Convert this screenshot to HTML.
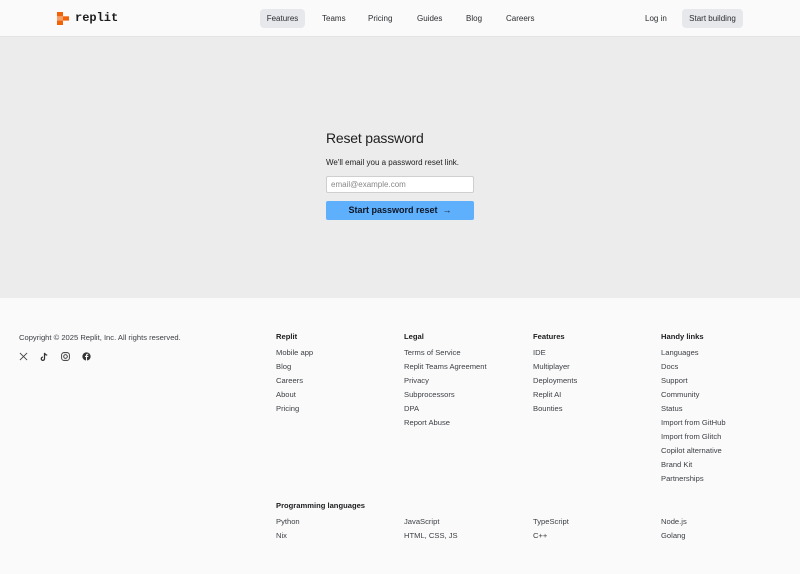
<!DOCTYPE html>
<html><head><meta charset="utf-8"><style>
*{box-sizing:border-box;margin:0;padding:0}
body{width:800px;height:574px;overflow:hidden;font-family:"Liberation Sans",sans-serif;color:#1c1d1f;background:#fafafa}
header{height:37px;background:#fafafa;border-bottom:1px solid #e4e4e4;position:relative;font-size:8px;color:#2b2d31}
.logo{position:absolute;left:57px;top:11px;display:flex;align-items:center}
.logo span{font-family:"Liberation Mono",monospace;font-weight:bold;font-size:12px;margin-left:6px;color:#1c1d1f}
header a{position:absolute;top:9px;height:19px;line-height:19px;border-radius:4px}
.on{background:#e6e8eb;left:260px;width:45px;text-align:center}
main{height:261px;background:#ececec;position:relative}
.f{position:absolute;left:326px;top:93px;width:148px}
h1{font-size:14px;font-weight:normal;letter-spacing:-.2px;height:16px}
.f p{font-size:8px;margin-top:12px}
.in{margin-top:9px;height:17px;background:#fff;border:1px solid #cfcfcf;border-radius:2px;font-size:8px;color:#888;padding:3px 4px}
.btn{margin-top:8px;height:19px;background:#5eb0fc;border-radius:2px;font-size:9px;font-weight:bold;text-align:center;line-height:19px;color:#0e1525}
footer{position:relative;font-size:7.6px;color:#3c3f44}
.c{position:absolute;left:19px;top:35px}
.col{position:absolute}
.col b{display:block;font-weight:bold;color:#1c1d1f;margin-bottom:7px}
.col div{height:14px}
</style></head><body>
<header>
<div class="logo"><svg width="12" height="13" viewBox="0 0 12 13"><rect x="0" y="0" width="6" height="4.3" fill="#f26207"/><rect x="6" y="4.3" width="6" height="4.3" fill="#f26207"/><rect x="0" y="8.6" width="6" height="4.4" fill="#f26207"/><rect x="0" y="4.3" width="6" height="4.3" fill="#f26207" opacity=".6"/></svg><span>replit</span></div>
<a class="on">Features</a><a style="left:322px">Teams</a><a style="left:368px">Pricing</a><a style="left:417px">Guides</a><a style="left:466px">Blog</a><a style="left:506px">Careers</a>
<a style="left:645px">Log in</a><a style="left:682px;width:61px;text-align:center;background:#e6e8eb">Start building</a>
</header>
<main><div class="f"><h1>Reset password</h1><p>We'll email you a password reset link.</p><div class="in">email@example.com</div><div class="btn">Start password reset &nbsp;→</div></div></main>
<footer>
<div class="c">Copyright © 2025 Replit, Inc. All rights reserved.
<div style="margin-top:10px;display:flex;gap:12px;align-items:center;color:#333">
<svg width="9" height="9" viewBox="0 0 10 10"><path d="M1 1L9 9M9 1L1 9" stroke="#444" stroke-width="1"/></svg>
<svg width="9" height="9" viewBox="0 0 10 10"><path d="M5 1V7.5A1.8 1.8 0 1 1 3.2 5.7M5 1C5.5 2.5 6.5 3.3 8 3.4" stroke="#333" stroke-width="1.4" fill="none"/></svg>
<svg width="9" height="9" viewBox="0 0 10 10"><rect x=".7" y=".7" width="8.6" height="8.6" rx="2.5" stroke="#333" fill="none"/><circle cx="5" cy="5" r="2" stroke="#333" fill="none"/></svg>
<svg width="9" height="9" viewBox="0 0 10 10"><circle cx="5" cy="5" r="4.6" fill="#333"/><path d="M5.6 10V5.5H7V4.3H5.6V3.6c0-.4.2-.6.6-.6H7V1.9H6C5 1.9 4.4 2.5 4.4 3.5v.8H3.3v1.2h1.1V10" fill="#fafafa"/></svg>
</div></div>
<div class="col" style="left:276px;top:34px"><b>Replit</b><div>Mobile app</div><div>Blog</div><div>Careers</div><div>About</div><div>Pricing</div></div>
<div class="col" style="left:404px;top:34px"><b>Legal</b><div>Terms of Service</div><div>Replit Teams Agreement</div><div>Privacy</div><div>Subprocessors</div><div>DPA</div><div>Report Abuse</div></div>
<div class="col" style="left:533px;top:34px"><b>Features</b><div>IDE</div><div>Multiplayer</div><div>Deployments</div><div>Replit AI</div><div>Bounties</div></div>
<div class="col" style="left:661px;top:34px"><b>Handy links</b><div>Languages</div><div>Docs</div><div>Support</div><div>Community</div><div>Status</div><div>Import from GitHub</div><div>Import from Glitch</div><div>Copilot alternative</div><div>Brand Kit</div><div>Partnerships</div></div>
<div class="col" style="left:276px;top:203px"><b>Programming languages</b><div>Python</div><div>Nix</div></div>
<div class="col" style="left:404px;top:219px"><div>JavaScript</div><div>HTML, CSS, JS</div></div>
<div class="col" style="left:533px;top:219px"><div>TypeScript</div><div>C++</div></div>
<div class="col" style="left:661px;top:219px"><div>Node.js</div><div>Golang</div></div>
</footer>
</body></html>
